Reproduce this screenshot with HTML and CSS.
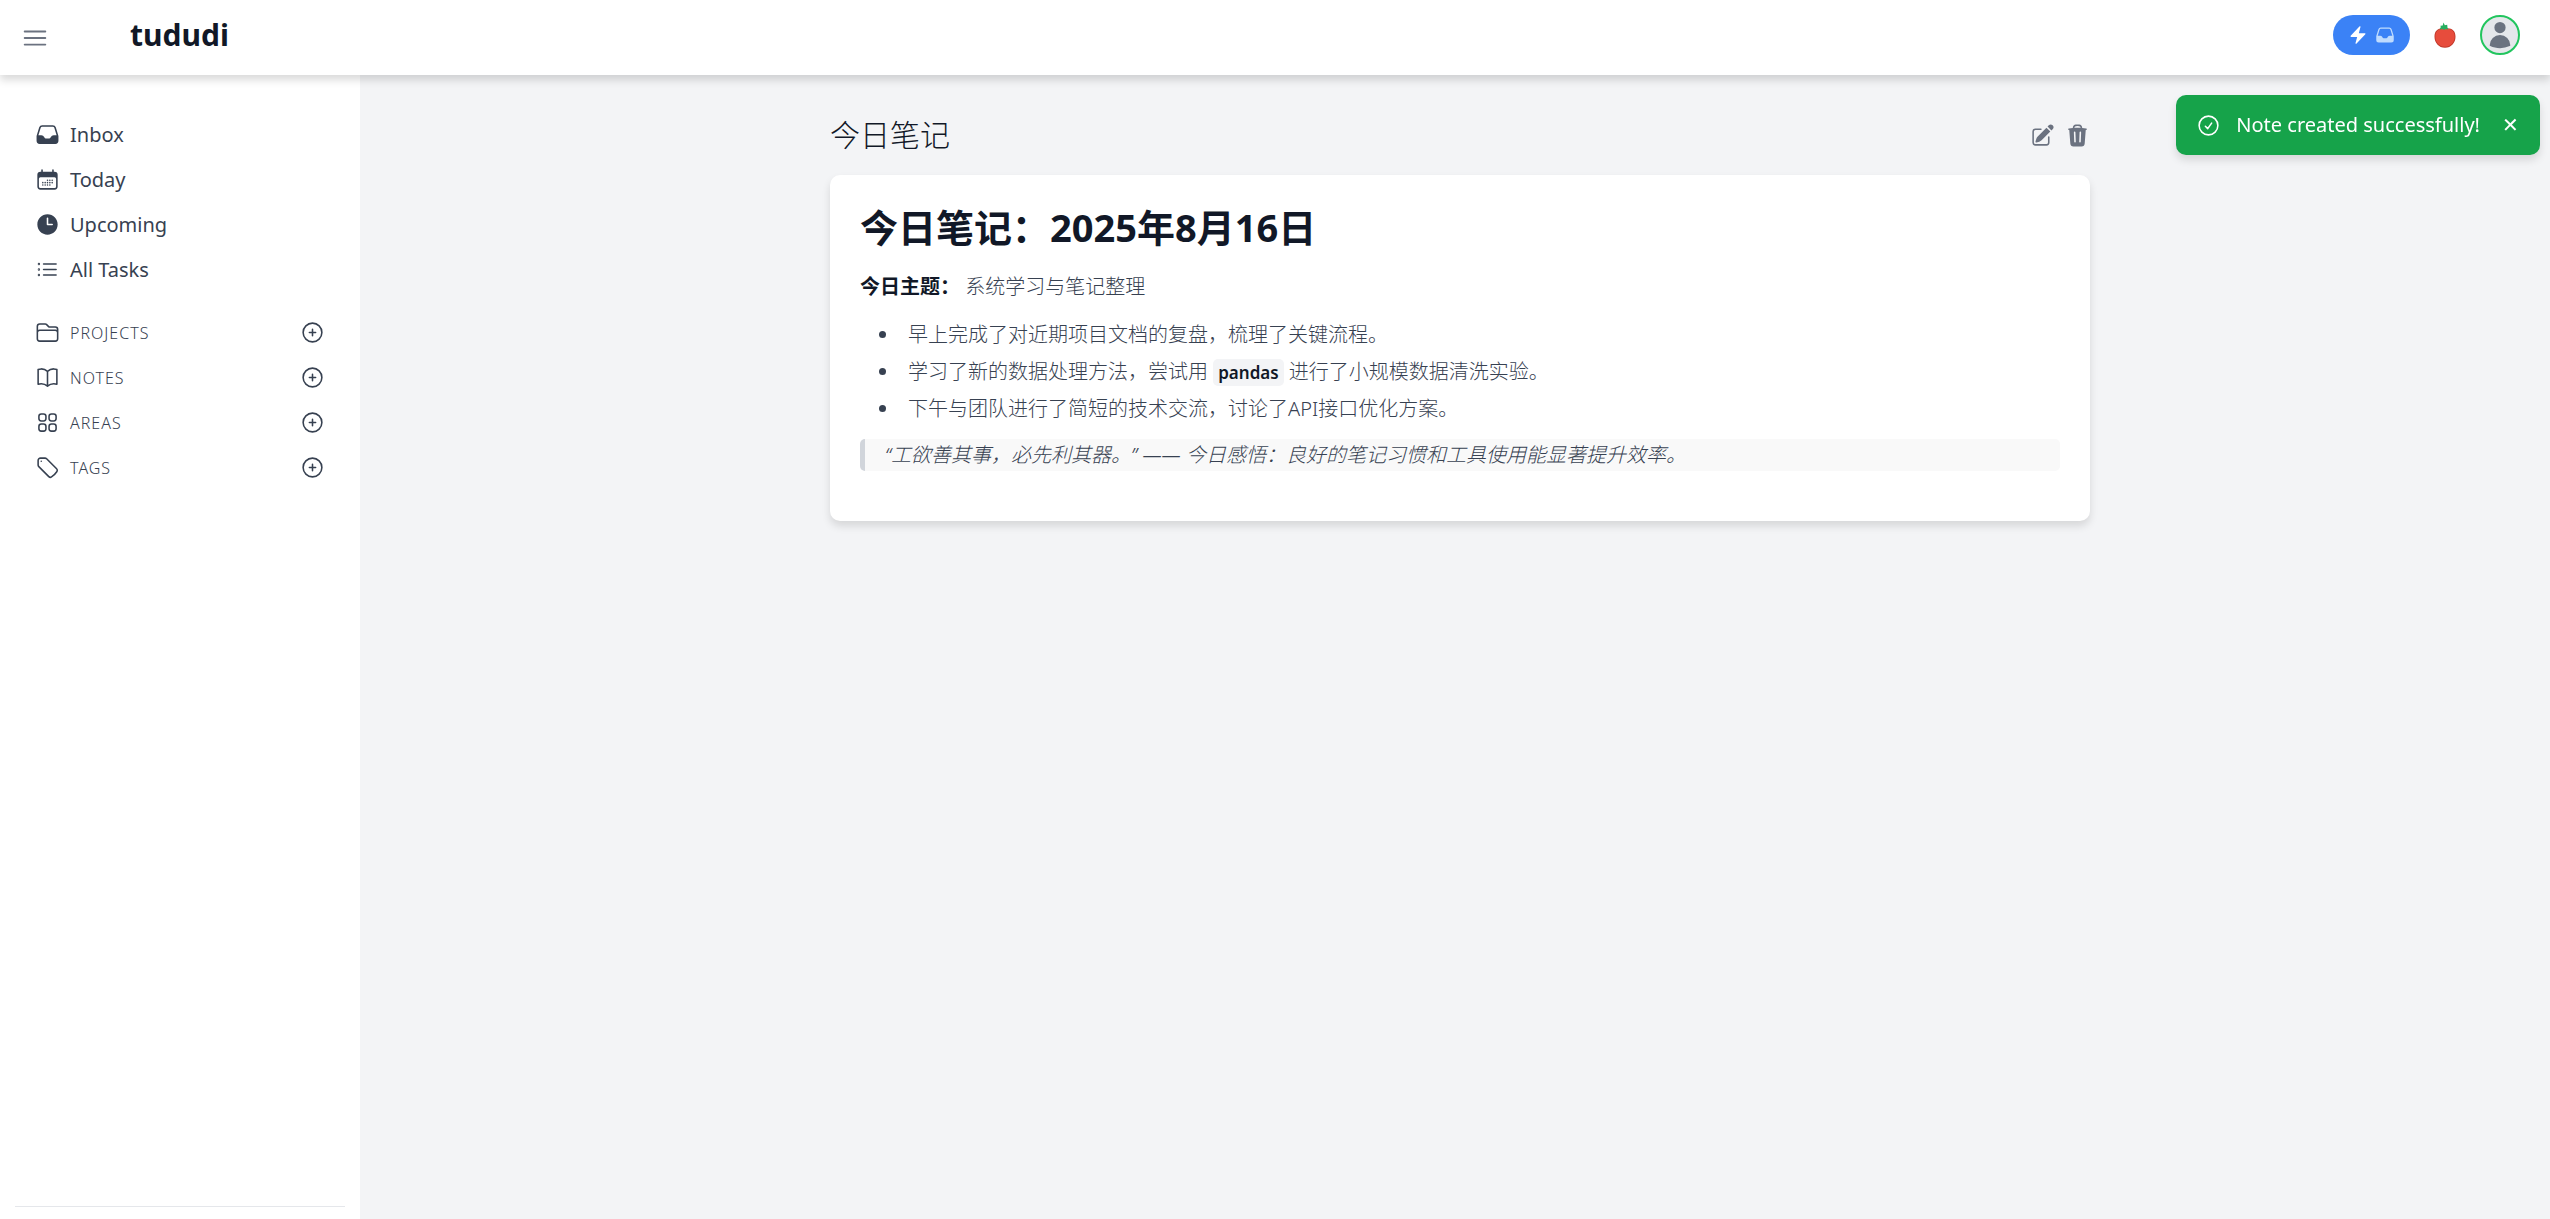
FILE: index.html
```html
<!DOCTYPE html>
<html lang="en">
<head>
  <meta charset="UTF-8">
  <meta name="viewport" content="width=device-width, initial-scale=1.0">
  <title>tududi</title>
  <link rel="stylesheet" href="styles.css">
</head>
<body>
  <header class="navbar">
    <button class="icon-button menu-button" aria-label="Toggle sidebar">
      <svg class="icon-lg line" viewBox="0 0 24 24"><path d="M3.75 6.75h16.5M3.75 12h16.5m-16.5 5.25h16.5"/></svg>
    </button>
    <a class="logo" href="#">tududi</a>
    <div class="navbar-actions">
      <button class="capture-button" aria-label="Quick capture">
        <svg class="icon-sm solid" viewBox="0 0 24 24"><path d="M14.615 1.595a.75.75 0 0 1 .359.852L12.982 9.75h7.268a.75.75 0 0 1 .548 1.262l-10.5 11.25a.75.75 0 0 1-1.272-.71l1.992-7.302H3.75a.75.75 0 0 1-.548-1.262l10.5-11.25a.75.75 0 0 1 .913-.143Z"/></svg>
        <svg class="icon-sm solid capture-inbox" viewBox="0 0 24 24"><path fill-rule="evenodd" d="M6.912 3a3 3 0 0 0-2.868 2.118l-2.411 7.838a3 3 0 0 0-.133.882V18a3 3 0 0 0 3 3h15a3 3 0 0 0 3-3v-4.162c0-.299-.045-.596-.133-.882l-2.412-7.838A3 3 0 0 0 17.088 3H6.912Zm13.823 9.75-2.213-7.191A1.5 1.5 0 0 0 17.088 4.5H6.912a1.5 1.5 0 0 0-1.434 1.059L3.265 12.75H6.11a3 3 0 0 1 2.684 1.658l.256.513a1.5 1.5 0 0 0 1.342.829h3.218a1.5 1.5 0 0 0 1.342-.83l.256-.512a3 3 0 0 1 2.684-1.658h2.844Z"/></svg>
      </button>
      <button class="icon-button" aria-label="Pomodoro timer">
        <svg class="icon-lg" viewBox="0 0 30 30">
          <path d="M15 8.500c6.500-1 10.500 2 10.500 8.200 0 6-4.200 11-10.500 11S4.500 22.700 4.500 16.700C4.500 10.500 8.500 7.500 15 8.500Z" fill="#c0392b"/>
          <path d="M15 9c5.800-1 9.600 2 9.600 7.500 0 5.700-3.900 10.200-9.600 10.200s-9.600-4.500-9.600-10.200C5.400 11 9.200 8 15 9Z" fill="#e74c3c"/>
          <path d="M13.500 2.500l1.300 2.700 2.400-.4.300 3 .9 1.600-2.900-.5-1.500 1.100-1.400-1.100-3 .5 1.200-2.300-.4-1.400 2.300-.2Z" fill="#27ae60"/>
        </svg>
      </button>
      <button class="avatar" aria-label="User menu">
        <svg class="icon-lg solid" viewBox="0 0 24 24"><path d="M7.500 6a4.500 4.500 0 1 1 9 0 4.500 4.500 0 0 1-9 0ZM3.751 20.105a8.250 8.250 0 0 1 16.498 0 .75.75 0 0 1-.437.695A18.683 18.683 0 0 1 12 22.500c-2.786 0-5.433-.608-7.812-1.700a.75.75 0 0 1-.437-.695Z"/></svg>
      </button>
    </div>
  </header>

  <div class="layout">
    <aside class="sidebar">
      <nav>
        <ul class="nav-list">
          <li><a class="nav-link" href="#">
            <svg class="icon solid" viewBox="0 0 24 24"><path fill-rule="evenodd" d="M6.912 3a3 3 0 0 0-2.868 2.118l-2.411 7.838a3 3 0 0 0-.133.882V18a3 3 0 0 0 3 3h15a3 3 0 0 0 3-3v-4.162c0-.299-.045-.596-.133-.882l-2.412-7.838A3 3 0 0 0 17.088 3H6.912Zm13.823 9.750-2.213-7.191A1.500 1.500 0 0 0 17.088 4.500H6.912a1.500 1.500 0 0 0-1.434 1.059L3.265 12.750H6.110a3 3 0 0 1 2.684 1.658l.256.513a1.500 1.500 0 0 0 1.342.829h3.218a1.500 1.500 0 0 0 1.342-.830l.256-.512a3 3 0 0 1 2.684-1.658h2.844Z"/></svg>
            Inbox
          </a></li>
          <li><a class="nav-link" href="#">
            <svg class="icon solid" viewBox="0 0 24 24">
              <path fill-rule="evenodd" d="M6.750 2.250A.75.75 0 0 1 7.500 3v1.500h9V3A.75.75 0 0 1 18 3v1.500h.75a3 3 0 0 1 3 3v11.250a3 3 0 0 1-3 3H5.250a3 3 0 0 1-3-3V7.500a3 3 0 0 1 3-3H6V3a.75.75 0 0 1 .75-.75Zm13.500 9a1.500 1.500 0 0 0-1.500-1.500H5.250a1.500 1.500 0 0 0-1.500 1.500v7.500a1.500 1.500 0 0 0 1.500 1.500h13.500a1.500 1.500 0 0 0 1.500-1.500v-7.500Z"/>
              <circle cx="12" cy="12.750" r=".75"/><circle cx="14.250" cy="12.750" r=".75"/><circle cx="16.500" cy="12.750" r=".75"/>
              <circle cx="7.500" cy="15" r=".75"/><circle cx="9.750" cy="15" r=".75"/><circle cx="12" cy="15" r=".75"/><circle cx="14.250" cy="15" r=".75"/><circle cx="16.500" cy="15" r=".75"/>
              <circle cx="7.500" cy="17.250" r=".75"/><circle cx="9.750" cy="17.250" r=".75"/><circle cx="12" cy="17.250" r=".75"/><circle cx="14.250" cy="17.250" r=".75"/>
            </svg>
            Today
          </a></li>
          <li><a class="nav-link" href="#">
            <svg class="icon solid" viewBox="0 0 24 24"><path fill-rule="evenodd" d="M12 2.250c-5.385 0-9.750 4.365-9.750 9.750s4.365 9.750 9.750 9.750 9.750-4.365 9.750-9.750S17.385 2.250 12 2.250ZM12.750 6a.75.75 0 0 0-1.500 0v6c0 .414.336.75.75.75h4.500a.75.75 0 0 0 0-1.500h-3.750V6Z"/></svg>
            Upcoming
          </a></li>
          <li><a class="nav-link" href="#">
            <svg class="icon line" viewBox="0 0 24 24">
              <path d="M8.250 6.750h12M8.250 12h12m-12 5.250h12"/>
              <circle cx="3.750" cy="6.750" r=".375"/><circle cx="3.750" cy="12" r=".375"/><circle cx="3.750" cy="17.250" r=".375"/>
            </svg>
            All Tasks
          </a></li>
        </ul>

        <ul class="nav-list section-list">
          <li class="section-row">
            <a class="nav-link section-link" href="#">
              <svg class="icon line" viewBox="0 0 24 24"><path d="M2.250 12.750V12A2.250 2.250 0 0 1 4.500 9.750h15A2.250 2.250 0 0 1 21.750 12v.75m-8.690-6.440-2.120-2.120a1.500 1.500 0 0 0-1.061-.440H4.500A2.250 2.250 0 0 0 2.250 6v12a2.250 2.250 0 0 0 2.250 2.250h15A2.250 2.250 0 0 0 21.750 18V9a2.250 2.250 0 0 0-2.250-2.250h-5.379a1.500 1.500 0 0 1-1.060-.440Z"/></svg>
              Projects
            </a>
            <button class="icon-button add-button" aria-label="Add project"><svg class="icon line" viewBox="0 0 24 24"><path d="M12 9v6m3-3H9m12 0a9 9 0 1 1-18 0 9 9 0 0 1 18 0Z"/></svg></button>
          </li>
          <li class="section-row">
            <a class="nav-link section-link" href="#">
              <svg class="icon line" viewBox="0 0 24 24"><path d="M12 6.042A8.967 8.967 0 0 0 6 3.750c-1.052 0-2.062.18-3 .512v14.250A8.987 8.987 0 0 1 6 18c2.305 0 4.408.867 6 2.292m0-14.250a8.966 8.966 0 0 1 6-2.292c1.052 0 2.062.18 3 .512v14.250A8.987 8.987 0 0 0 18 18a8.967 8.967 0 0 0-6 2.292m0-14.250v14.250"/></svg>
              Notes
            </a>
            <button class="icon-button add-button" aria-label="Add note"><svg class="icon line" viewBox="0 0 24 24"><path d="M12 9v6m3-3H9m12 0a9 9 0 1 1-18 0 9 9 0 0 1 18 0Z"/></svg></button>
          </li>
          <li class="section-row">
            <a class="nav-link section-link" href="#">
              <svg class="icon line" viewBox="0 0 24 24">
                <rect x="3.750" y="3.750" width="6.750" height="6.750" rx="2.250"/><rect x="13.500" y="3.750" width="6.750" height="6.750" rx="2.250"/>
                <rect x="3.750" y="13.500" width="6.750" height="6.750" rx="2.250"/><rect x="13.500" y="13.500" width="6.750" height="6.750" rx="2.250"/>
              </svg>
              Areas
            </a>
            <button class="icon-button add-button" aria-label="Add area"><svg class="icon line" viewBox="0 0 24 24"><path d="M12 9v6m3-3H9m12 0a9 9 0 1 1-18 0 9 9 0 0 1 18 0Z"/></svg></button>
          </li>
          <li class="section-row">
            <a class="nav-link section-link" href="#">
              <svg class="icon line" viewBox="0 0 24 24"><path d="M9.568 3H5.250A2.250 2.250 0 0 0 3 5.250v4.318c0 .597.237 1.170.659 1.591l9.581 9.581c.699.699 1.780.872 2.607.330a18.095 18.095 0 0 0 5.223-5.223c.542-.827.369-1.908-.330-2.607L11.160 3.660A2.250 2.250 0 0 0 9.568 3Z"/><path d="M6 6h.008v.008H6V6Z"/></svg>
              Tags
            </a>
            <button class="icon-button add-button" aria-label="Add tag"><svg class="icon line" viewBox="0 0 24 24"><path d="M12 9v6m3-3H9m12 0a9 9 0 1 1-18 0 9 9 0 0 1 18 0Z"/></svg></button>
          </li>
        </ul>
      </nav>
      <div class="sidebar-footer"></div>
    </aside>

    <main class="content">
      <div class="note" lang="zh-CN">
        <div class="note-header">
          <h2 class="note-title">今日笔记</h2>
          <div class="note-actions">
            <button class="icon-button" aria-label="Edit note">
              <svg class="icon solid" viewBox="0 0 24 24"><path d="M21.731 2.269a2.625 2.625 0 0 0-3.712 0l-1.157 1.157 3.712 3.712 1.157-1.157a2.625 2.625 0 0 0 0-3.712ZM19.513 8.199l-3.712-3.712-8.400 8.400a5.250 5.250 0 0 0-1.320 2.214l-.8 2.685a.75.75 0 0 0 .933.933l2.685-.8a5.250 5.250 0 0 0 2.214-1.320l8.400-8.400Z"/><path d="M5.250 5.250a3 3 0 0 0-3 3v10.500a3 3 0 0 0 3 3h10.500a3 3 0 0 0 3-3V13.500a.75.75 0 0 0-1.500 0v5.250a1.500 1.500 0 0 1-1.500 1.500H5.250a1.500 1.500 0 0 1-1.500-1.500V8.250a1.500 1.500 0 0 1 1.500-1.500h5.250a.75.75 0 0 0 0-1.500H5.250Z"/></svg>
            </button>
            <button class="icon-button" aria-label="Delete note">
              <svg class="icon solid" viewBox="0 0 24 24"><path fill-rule="evenodd" d="M16.500 4.478v.227a48.816 48.816 0 0 1 3.878.512.75.75 0 1 1-.256 1.478l-.209-.035-1.005 13.070a3 3 0 0 1-2.991 2.770H8.084a3 3 0 0 1-2.991-2.770L4.087 6.660l-.209.035a.75.75 0 0 1-.256-1.478A48.567 48.567 0 0 1 7.500 4.705v-.227c0-1.564 1.213-2.900 2.816-2.951a52.662 52.662 0 0 1 3.369 0c1.603.051 2.815 1.387 2.815 2.951Zm-6.136-1.452a51.196 51.196 0 0 1 3.273 0C14.390 3.050 15 3.684 15 4.478v.113a49.488 49.488 0 0 0-6 0v-.113c0-.794.609-1.428 1.364-1.452Zm-.355 5.945a.75.75 0 1 0-1.500.058l.347 9a.75.75 0 1 0 1.499-.058l-.346-9Zm5.480.058a.75.75 0 1 0-1.498-.058l-.347 9a.75.75 0 0 0 1.500.058l.345-9Z"/></svg>
            </button>
          </div>
        </div>
        <article class="card">
          <h1>今日笔记：2025年8月16日</h1>
          <p><strong>今日主题：</strong> 系统学习与笔记整理</p>
          <ul>
            <li>早上完成了对近期项目文档的复盘，梳理了关键流程。</li>
            <li>学习了新的数据处理方法，尝试用 <code>pandas</code> 进行了小规模数据清洗实验。</li>
            <li>下午与团队进行了简短的技术交流，讨论了API接口优化方案。</li>
          </ul>
          <blockquote>“工欲善其事，必先利其器。” —— 今日感悟：良好的笔记习惯和工具使用能显著提升效率。</blockquote>
        </article>
      </div>
    </main>
  </div>

  <div class="toast" role="status">
    <svg class="icon line" viewBox="0 0 24 24"><path d="M9 12.750 11.250 15 15 9.750M21 12a9 9 0 1 1-18 0 9 9 0 0 1 18 0Z"/></svg>
    <span class="toast-text">Note created successfully!</span>
    <button class="toast-close" aria-label="Close">✕</button>
  </div>
</body>
</html>
```

FILE: styles.css
```css
* {
  box-sizing: border-box;
}

body {
  margin: 0;
  min-height: 100vh;
  display: flex;
  flex-direction: column;
  font-family: "Noto Sans", "Noto Sans CJK SC", sans-serif;
  font-size: 20px;
  line-height: 30px;
  color: #374151;
  background-color: #f3f4f6;
}

ul {
  margin: 0;
  padding: 0;
  list-style: none;
}

a {
  color: inherit;
  text-decoration: none;
}

button {
  font: inherit;
  color: inherit;
  background: none;
  border: none;
  padding: 0;
  cursor: pointer;
}

/* Icons */
svg {
  display: block;
  flex-shrink: 0;
}

.icon-sm {
  width: 20px;
  height: 20px;
}

.icon {
  width: 25px;
  height: 25px;
}

.icon-lg {
  width: 30px;
  height: 30px;
}

.solid {
  fill: currentColor;
}

.line {
  fill: none;
  stroke: currentColor;
  stroke-width: 1.5;
  stroke-linecap: round;
  stroke-linejoin: round;
}

.icon-button {
  color: #6b7280;
}

/* Top bar */
.navbar {
  position: sticky;
  top: 0;
  z-index: 10;
  display: flex;
  align-items: center;
  height: 75px;
  padding: 0 30px 5px 20px;
  background-color: #fff;
  box-shadow: 0 5px 8px rgba(0, 0, 0, 0.15);
}

.menu-button {
  padding-top: 5px;
}

.logo {
  margin-left: 80px;
  font-size: 30px;
  font-weight: 700;
  color: #111827;
}

.navbar-actions {
  display: flex;
  align-items: center;
  gap: 20px;
  margin-left: auto;
}

.capture-button {
  display: flex;
  align-items: center;
  gap: 7px;
  height: 40px;
  padding: 0 15px;
  border-radius: 20px;
  color: #fff;
  background-color: #3b82f6;
}

.capture-inbox {
  color: #bfdbfe;
}

.avatar {
  display: flex;
  align-items: center;
  justify-content: center;
  width: 40px;
  height: 40px;
  border: 2px solid #22c55e;
  border-radius: 50%;
  color: #6b7280;
  background-color: #e5e7eb;
}

/* Sidebar */
.layout {
  flex: 1;
  display: flex;
}

.sidebar {
  width: 360px;
  flex-shrink: 0;
  display: flex;
  flex-direction: column;
  justify-content: space-between;
  padding: 37px 15px 12px;
  background-color: #fff;
}

.nav-list {
  padding: 0 20px;
}

.section-list {
  margin-top: 18px;
}

.nav-link {
  display: flex;
  align-items: center;
  gap: 10px;
  height: 45px;
}

.section-row {
  display: flex;
  align-items: center;
  justify-content: space-between;
}

.section-link {
  font-size: 16px;
  font-weight: 300;
  letter-spacing: 1px;
  text-transform: uppercase;
}

.add-button {
  color: #374151;
}

.sidebar-footer {
  border-top: 1px solid #e5e7eb;
}

/* Note */
.content {
  flex: 1;
  min-width: 0;
  padding: 40px 10px 40px 20px;
}

.note {
  max-width: 1260px;
  margin: 0 auto;
}

.note-header {
  display: flex;
  align-items: center;
  justify-content: space-between;
  margin-bottom: 20px;
}

.note-title {
  margin: 0;
  font-size: 30px;
  font-weight: 300;
  line-height: 40px;
  color: #111827;
}

.note-actions {
  display: flex;
  gap: 10px;
}

.card {
  padding: 30px 30px 50px;
  border-radius: 10px;
  line-height: 32px;
  font-weight: 300;
  background-color: #fff;
  box-shadow: 0 5px 8px rgba(0, 0, 0, 0.12);
}

.card h1 {
  margin: 0 0 22px;
  font-size: 38px;
  font-weight: 700;
  line-height: 44px;
  color: #111827;
}

.card p {
  margin: 0 0 16px;
}

.card strong {
  font-weight: 700;
  color: #111827;
}

.card ul {
  margin-bottom: 14px;
  padding-left: 40px;
  list-style: disc;
}

.card li {
  padding-left: 8px;
}

.card li + li {
  margin-top: 5px;
}

.card code {
  padding: 2px 5px;
  border-radius: 5px;
  font-family: inherit;
  font-size: 17px;
  font-weight: 600;
  line-height: 20px;
  color: #111827;
  background-color: #f3f4f6;
}

.card blockquote {
  margin: 0;
  padding-left: 20px;
  border-left: 5px solid #d1d5db;
  border-radius: 5px;
  font-style: italic;
  text-spacing-trim: space-all;
  background-color: #f9f9f9;
}

/* Toast */
.toast {
  position: fixed;
  top: 95px;
  right: 10px;
  z-index: 20;
  display: flex;
  align-items: center;
  height: 60px;
  padding: 0 20px;
  border-radius: 10px;
  color: #fff;
  background-color: #16a34a;
  box-shadow: 0 5px 8px rgba(0, 0, 0, 0.12);
}

.toast-text {
  margin: 0 20px 0 15px;
}

.toast-close {
  width: 20px;
}
```
